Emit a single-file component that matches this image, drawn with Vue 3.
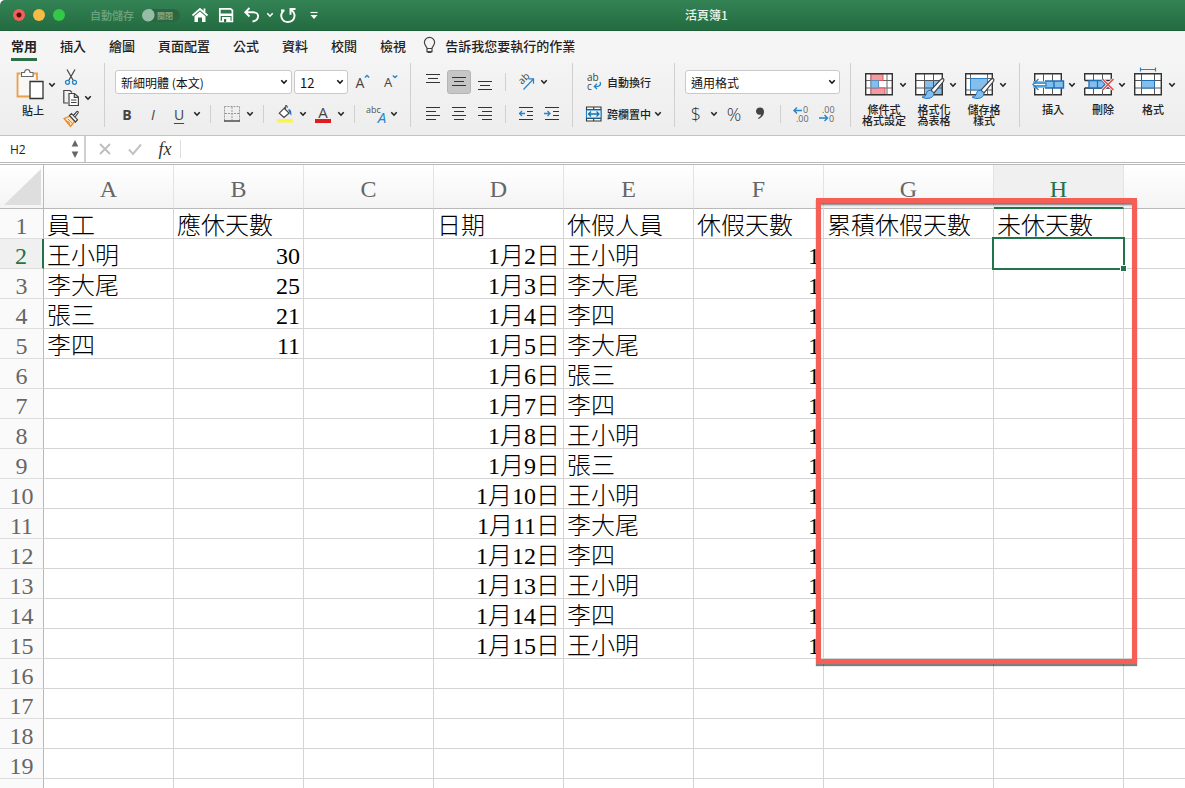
<script setup>
import { ref } from 'vue'

const tabs = ['常用', '插入', '繪圖', '頁面配置', '公式', '資料', '校閱', '檢視']
const columns = ['A', 'B', 'C', 'D', 'E', 'F', 'G', 'H', '']
const cellRef = ref('H2')
const formula = ref('')
const autosave = ref(false)

const staff = [['王小明', 30], ['李大尾', 25], ['張三', 21], ['李四', 11]]
const leave = ['王小明', '李大尾', '李四', '李大尾', '張三', '李四', '王小明', '張三', '王小明', '李大尾', '李四', '王小明', '李四', '王小明']

const rows = [['員工', '應休天數', '', '日期', '休假人員', '休假天數', '累積休假天數', '未休天數', '']]
for (let i = 0; i < 19; i++) {
  const s = staff[i] || ['', '']
  const l = leave[i]
  rows.push([s[0], s[1], '', l ? `1月${i + 2}日` : '', l || '', l ? 1 : '', '', '', ''])
}
const isRight = (r, c) => r > 0 && (c === 1 || c === 3 || c === 5)
</script>

<template>
  <div class="app">
    <svg class="defs" width="0" height="0" aria-hidden="true">
      <defs>
        <symbol id="chev" viewBox="0 0 8 6"><path d="M1.3 1.3 4 4.2 6.7 1.3" fill="none" stroke="currentColor" stroke-width="1.6" /></symbol>
        <symbol id="brush" viewBox="0 0 24 22">
          <path d="M22.5 .8c-1-.8-2 .1-3 1L10 12.2l3 2.7 8.700-10.500c1-1.300 1.700-2.700.8-3.600Z" fill="#fff" stroke="#444" stroke-width="1.200" />
          <path d="M9.600 12.300c-2.600-.1-3.800 1.300-4.200 3.200-.4 2-1.600 3.200-4.400 3.600 4.200 2.400 10 1.400 11.400-1.600.5-1 .6-1.800.5-2.600Z" fill="#83beec" stroke="#1f6fb5" stroke-width="1" />
        </symbol>
      </defs>
    </svg>

    <header class="titlebar">
      <div class="lights">
        <button class="light red" aria-label="關閉視窗"></button>
        <button class="light yellow" aria-label="縮到最小"></button>
        <button class="light green" aria-label="縮放"></button>
      </div>
      <label class="autosave">
        <span class="auto-text">自動儲存</span>
        <input v-model="autosave" type="checkbox" />
        <span class="switch">關閉</span>
      </label>
      <div class="quick">
        <button class="q-btn" aria-label="首頁">
          <svg width="18" height="18" viewBox="0 0 18 18"><path d="M1.500 9.500 9 3l7.500 6.500M13.500 6V2.500" fill="none" stroke="#fff" stroke-width="1.800" /><path d="M3.500 10.200 9 5.500l5.500 4.700V16H11v-4.500H7V16H3.500Z" fill="#fff" /></svg>
        </button>
        <button class="q-btn" aria-label="儲存">
          <svg width="18" height="18" viewBox="0 0 18 18"><path d="M2.800 2.800h10.800l1.800 1.500v11.200H2.800Z" fill="none" stroke="#fff" stroke-width="1.700" /><path d="M3 7.500h12v2.500H3ZM5 11h8.500v4.500H5Z" fill="#fff" /><path d="M7 13h2.200v3H7Z" fill="#257045" /></svg>
        </button>
        <button class="q-btn" aria-label="復原">
          <svg width="18" height="18" viewBox="0 0 18 18"><path d="M6.500 2 2.300 6.300l4.200 4.200M2.500 6.300h8c6.500.2 6.200 8-1 9.200" fill="none" stroke="#fff" stroke-width="1.900" /></svg>
        </button>
        <button class="q-chev" aria-label="復原選項"><svg width="8" height="6"><use href="#chev" /></svg></button>
        <button class="q-btn" aria-label="重複">
          <svg width="18" height="18" viewBox="0 0 18 18"><path d="M2 4.500h3.500M4.500 5c-4.500 4-1.800 11 4.300 11 7 0 9.500-8.500 2.700-12.300M16.500 3h-5v5.800" fill="none" stroke="#fff" stroke-width="1.900" /></svg>
        </button>
        <button class="q-more" aria-label="自訂工具列">
          <svg width="10" height="10" viewBox="0 0 10 10"><path d="M1.500 2.500h7" stroke="#fff" stroke-width="1.200" /><path d="M1.500 5h7L5 9Z" fill="#fff" /></svg>
        </button>
      </div>
      <h1 class="doc">活頁簿1</h1>
    </header>

    <nav class="tabs">
      <button v-for="(t, i) in tabs" :key="t" class="tab" :class="{ active: i === 0 }">{{ t }}</button>
      <button class="tell">
        <svg width="13" height="18" viewBox="0 0 13 18"><path d="M4 11.500c0-2-2.600-3.200-2.600-6a5.100 5.100 0 0 1 10.200 0c0 2.800-2.600 4-2.600 6ZM4 11.500v3.200h5v-3.200M4.500 15.500h4" fill="none" stroke="#444" stroke-width="1.200" /></svg>
        告訴我您要執行的作業
      </button>
    </nav>

    <section class="ribbon">
      <div class="group clipboard">
        <button class="paste">
          <span class="paste-top">
            <svg width="30" height="34" viewBox="0 0 30 34"><path d="M4.500 5.500H1.500v23H14M18 5.500h3V12" fill="none" stroke="#eba048" stroke-width="1.800" /><path d="M3.500 7h16v5H13v15H3.500Z" fill="#faf8f5" /><path d="M5.500 8.500v-4h3c.4-4 5.200-4 5.600 0h3v4Z" fill="#fff" stroke="#666" stroke-width="1.100" /><path d="M14 13.500h13v17H14Z" fill="#fff" stroke="#333" stroke-width="1.300" /></svg>
            <svg class="c" width="8" height="6"><use href="#chev" /></svg>
          </span>
          <span class="paste-label">貼上</span>
        </button>
        <div class="clip-side">
          <button class="clip-btn" aria-label="剪下"><svg width="16" height="18" viewBox="0 0 16 18"><path d="M4 1.500 10.300 12.500M12 1.500 5.700 12.500" fill="none" stroke="#444" stroke-width="1.200" /><circle cx="4.500" cy="14.300" r="2" fill="none" stroke="#2585c9" stroke-width="1.300" /><circle cx="11.500" cy="14.300" r="2" fill="none" stroke="#2585c9" stroke-width="1.300" /></svg></button>
          <button class="clip-btn" aria-label="複製"><svg width="16" height="18" viewBox="0 0 16 18"><path d="M5 14H.8V1.500H7L9 3.500" fill="none" stroke="#444" stroke-width="1.200" /><path d="M6 4.500h5.500L15.400 8v8.500H6ZM11.300 4.500V8.300h4" fill="#fff" stroke="#444" stroke-width="1.200" /><path d="M8 11h5.500M8 13.500h5.500" stroke="#444" /></svg><svg class="c" width="8" height="6"><use href="#chev" /></svg></button>
          <button class="clip-btn" aria-label="複製格式"><svg width="16" height="18" viewBox="0 0 16 18"><path d="m1 8.500 6-2.500 5 5-4.500 5.500Z" fill="#fbe0bb" stroke="#e58a2e" stroke-width="1.200" /><path d="M3 11l3 1 .5 3M5 9l4 4" stroke="#e58a2e" stroke-width="1" fill="none" /><path d="m6.500 5.500 2-1.800 6 6L12.500 12ZM10.500 5.500l3.200-3.800c1-.8 2 .2 1.300 1.300L12 7" fill="#fff" stroke="#444" stroke-width="1.200" /></svg></button>
        </div>
      </div>

      <div class="group font">
        <div class="row fields">
          <span class="select font-name"><select aria-label="字型"><option>新細明體 (本文)</option></select><svg width="8" height="6"><use href="#chev" /></svg></span>
          <span class="select font-size"><select aria-label="字型大小"><option>12</option></select><svg width="8" height="6"><use href="#chev" /></svg></span>
          <button class="btn" aria-label="放大字型"><span class="glyph">A</span><svg class="mini" width="6" height="12" viewBox="0 0 6 12"><path d="m.8 3.500 2.200-2 2.200 2" fill="none" stroke="#2585c9" stroke-width="1.300" /></svg></button>
          <button class="btn" aria-label="縮小字型"><span class="glyph small">A</span><svg class="mini" width="6" height="12" viewBox="0 0 6 12"><path d="m.8 1.500 2.200 2 2.200-2" fill="none" stroke="#2585c9" stroke-width="1.300" /></svg></button>
        </div>
        <div class="row">
          <button class="btn glyph bold">B</button>
          <button class="btn glyph italic">I</button>
          <button class="btn glyph under">U</button>
          <button class="drop" aria-label="底線選項"><svg width="8" height="6"><use href="#chev" /></svg></button>
          <i class="sep"></i>
          <button class="btn" aria-label="框線"><svg width="16" height="16" viewBox="0 0 16 16"><path d="M.5.500h15v14M.5.500v14M8 1v13M1 7.500h14" fill="none" stroke="#999" stroke-dasharray="2 1" /><path d="M0 15h16" stroke="#222" stroke-width="1.200" /></svg></button>
          <button class="drop" aria-label="框線選項"><svg width="8" height="6"><use href="#chev" /></svg></button>
          <i class="sep"></i>
          <button class="btn" aria-label="填滿色彩"><svg width="18" height="18" viewBox="0 0 18 18"><path d="M1 14h16v3.500H1Z" fill="#fdf443" /><path d="m8.500 3.500 4.500 4.700-5 4.300-4.700-4.300 6-6V5M9.200.8c1.500-.5 2.300.5 1.800 2" fill="#fff" stroke="#444" stroke-width="1.200" /><path d="M12.500 4c2.500.5 3.200 2.500 2.800 6.500-1.500-.8-1.800-3.500-2.800-4.500Z" fill="#2070b8" /></svg></button>
          <button class="drop" aria-label="填滿色彩選項"><svg width="8" height="6"><use href="#chev" /></svg></button>
          <button class="btn gap font-color" aria-label="字型色彩"><span class="glyph">A</span></button>
          <button class="drop" aria-label="字型色彩選項"><svg width="8" height="6"><use href="#chev" /></svg></button>
          <i class="sep"></i>
          <button class="btn phonetic" aria-label="注音"><span class="abc">abc</span><span class="blue-a">A</span></button>
          <button class="drop" aria-label="注音選項"><svg width="8" height="6"><use href="#chev" /></svg></button>
        </div>
      </div>

      <div class="group align">
        <div class="row">
          <button class="btn" aria-label="靠上對齊"><svg width="16" height="16" viewBox="0 0 16 16"><path d="M1 .5h14M3 4.500h10M1 8.500h14" stroke="#333" /></svg></button>
          <button class="btn pressed" aria-label="置中對齊"><svg width="16" height="16" viewBox="0 0 16 16"><path d="M1 3.500h14M3 7.500h10M1 11.500h14" stroke="#333" /></svg></button>
          <button class="btn" aria-label="靠下對齊"><svg width="16" height="16" viewBox="0 0 16 16"><path d="M1 7.500h14M3 11.500h10M1 15.500h14" stroke="#333" /></svg></button>
          <i class="sep narrow"></i>
          <button class="btn" aria-label="方向"><svg width="18" height="18" viewBox="0 0 18 18"><text x="0" y="0" transform="translate(5 12) rotate(-45)" class="svg-ab">ab</text><path d="M6.500 16.500 16.500 6M11.500 5.800h5v5" fill="none" stroke="#2585c9" stroke-width="1.200" /></svg></button>
          <button class="drop" aria-label="方向選項"><svg width="8" height="6"><use href="#chev" /></svg></button>
        </div>
        <div class="row">
          <button class="btn" aria-label="靠左"><svg width="16" height="16" viewBox="0 0 16 16"><path d="M1 1.500h14M1 5.500h10M1 9.500h14M1 13.500h10" stroke="#333" /></svg></button>
          <button class="btn" aria-label="置中"><svg width="16" height="16" viewBox="0 0 16 16"><path d="M1 1.500h14M3 5.500h10M1 9.500h14M3 13.500h10" stroke="#333" /></svg></button>
          <button class="btn" aria-label="靠右"><svg width="16" height="16" viewBox="0 0 16 16"><path d="M1 1.500h14M5 5.500h10M1 9.500h14M5 13.500h10" stroke="#333" /></svg></button>
          <i class="sep narrow"></i>
          <button class="btn" aria-label="減少縮排"><svg width="16" height="16" viewBox="0 0 16 16"><path d="M1 1.500h14M9 5.500h6M9 9.500h6M1 13.500h14" stroke="#333" /><path d="M7 7.500H1.500M4 5 1.500 7.500 4 10" fill="none" stroke="#2585c9" stroke-width="1.300" /></svg></button>
          <button class="btn" aria-label="增加縮排"><svg width="16" height="16" viewBox="0 0 16 16"><path d="M1 1.500h14M9 5.500h6M9 9.500h6M1 13.500h14" stroke="#333" /><path d="M0 7.500h6M3.500 5 6 7.500 3.500 10" fill="none" stroke="#2585c9" stroke-width="1.300" /></svg></button>
        </div>
      </div>

      <div class="group wrap">
        <div class="row">
          <button class="text-btn"><svg width="18" height="18" viewBox="0 0 18 18"><text x="2" y="8" class="svg-ab">ab</text><text x="2" y="17" class="svg-ab">c</text><path d="M15 9c1.500 3-.5 4.800-5.500 4.500M12 10.800 9.300 13.500l2.700 2.500" fill="none" stroke="#2585c9" stroke-width="1.300" /></svg>自動換行</button>
        </div>
        <div class="row">
          <button class="text-btn"><svg width="18" height="18" viewBox="0 0 18 18"><path d="M1.500 2h14.500v14H1.500ZM1.500 4.500H16M1.500 13.500H16M8.700 2v2.500M8.700 13.500V16" fill="#fff" stroke="#333" stroke-width="1.100" /><path d="M1.500 5h14.500v8H1.500Z" fill="#e3f1fb" stroke="#1f7fc0" /><path d="M3.500 9h10.500M6 6.500 3.500 9 6 11.500M11.500 6.500 14 9l-2.500 2.500" fill="none" stroke="#1473a8" stroke-width="1.300" /></svg>跨欄置中</button>
          <button class="drop wide" aria-label="跨欄置中選項"><svg width="8" height="6"><use href="#chev" /></svg></button>
        </div>
      </div>

      <div class="group number">
        <div class="row fields2">
          <span class="select number-format"><select aria-label="數值格式"><option>通用格式</option></select><svg width="8" height="6"><use href="#chev" /></svg></span>
        </div>
        <div class="row">
          <button class="btn num">$</button>
          <button class="drop" aria-label="貨幣選項"><svg width="8" height="6"><use href="#chev" /></svg></button>
          <button class="btn num gap">%</button>
          <button class="btn" aria-label="千分位樣式"><svg width="10" height="16" viewBox="0 0 10 16"><path d="M5 1.500c2.500 0 4 1.500 4 4.300 0 3.500-2.500 6-5.500 7.200l-.5-1c2-1 3-2.300 3-3.500-3 .8-5-.8-5-3.200C1 3 2.700 1.500 5 1.500Z" fill="#444" /></svg></button>
          <i class="sep narrow"></i>
          <button class="btn" aria-label="增加小數位數"><svg width="18" height="18" viewBox="0 0 18 18"><text x="11" y="8" class="svg-num">0</text><text x="4" y="17" class="svg-num">.00</text><path d="M10 5.500H2M5 2.500l-3 3 3 3" fill="none" stroke="#2585c9" stroke-width="1.400" /></svg></button>
          <button class="btn" aria-label="減少小數位數"><svg width="18" height="18" viewBox="0 0 18 18"><text x="4" y="8" class="svg-num">.00</text><text x="11" y="17" class="svg-num">0</text><path d="M1 13h8.500M6.500 10l3 3-3 3" fill="none" stroke="#2585c9" stroke-width="1.400" /></svg></button>
        </div>
      </div>

      <div class="group big-group styles">
        <button class="big">
          <span class="big-top">
            <svg width="28" height="34" viewBox="0 0 28 34"><path d="M.7 5.700h26.600v21H.7Z" fill="#fff" /><path d="M.7 12.500h26.600M.7 20h26.600M6 5.500v21M22 5.500v21" stroke="#666" fill="none" /><path d="M6 5.700h12v6.800H6ZM6 20h14v6.700H6Z" fill="#f59aa0" stroke="#e0525c" /><path d="M6 12.500h7.500V20H6Z" fill="#83beec" stroke="#5b8fc0" /><path d="M.7 5.700h26.600v21H.7Z" fill="none" stroke="#333" stroke-width="1.400" /></svg>
            <svg class="c" width="8" height="6"><use href="#chev" /></svg>
          </span>
          <span class="big-label">條件式<br />格式設定</span>
        </button>
        <button class="big">
          <span class="big-top">
            <svg width="28" height="34" viewBox="0 0 28 34"><path d="M.7 5.700h26.600v21H.7Z" fill="#fff" /><path d="M9.500 12.500h17.800v14.200H9.500Z" fill="#83beec" /><path d="M.7 12.500h26.600M.7 20h26.600M9.500 5.500v21M18.500 5.500v21" stroke="#555" fill="none" /><path d="M.7 5.700h26.600v21H.7Z" fill="none" stroke="#333" stroke-width="1.400" /><use href="#brush" x="6" y="10" width="24" height="22" /></svg>
            <svg class="c" width="8" height="6"><use href="#chev" /></svg>
          </span>
          <span class="big-label">格式化<br />為表格</span>
        </button>
        <button class="big">
          <span class="big-top">
            <svg width="28" height="34" viewBox="0 0 28 34"><path d="M.7 5.700h26.600v21H.7Z" fill="#fff" /><path d="M.7 10.500h26.600M.7 22h26.600M5.500 5.500v21M22.500 5.500v21" stroke="#666" fill="none" /><path d="M5.500 10.500h17V22h-17Z" fill="#83beec" stroke="#2d83c5" /><path d="M.7 5.700h26.600v21H.7Z" fill="none" stroke="#333" stroke-width="1.400" /><use href="#brush" x="6" y="10" width="24" height="22" /></svg>
            <svg class="c" width="8" height="6"><use href="#chev" /></svg>
          </span>
          <span class="big-label">儲存格<br />樣式</span>
        </button>
      </div>

      <div class="group big-group cells">
        <button class="big">
          <span class="big-top">
            <svg width="28" height="34" viewBox="0 0 28 34"><path d="M.7 5.700h26.600v21H.7Z" fill="#fff" stroke="#333" stroke-width="1.400" /><path d="M9.500 6v7M18.500 6v7M9.500 20v7M18.500 20v7" stroke="#555" /><path d="M-1 13h30v7H-1Z" fill="#83beec" /><path d="M11 13h18.500v7H11M20 13v7" fill="none" stroke="#1f6fb5" stroke-width="1.400" /><path d="M-1 15.500h13v2H-1Z" fill="#fff" /><path d="m4.500 11-5.500 5.500 5.500 5.500M0 15.200h12v2.600H0" fill="none" stroke="#2585c9" stroke-width="1.300" /></svg>
            <svg class="c" width="8" height="6"><use href="#chev" /></svg>
          </span>
          <span class="big-label">插入</span>
        </button>
        <button class="big">
          <span class="big-top">
            <svg width="28" height="34" viewBox="0 0 28 34"><path d="M.7 12.500V5.700h26.600v6.800H.7M.7 20v6.700h26.600V20H.7" fill="#fff" stroke="#333" stroke-width="1.400" /><path d="M9.500 6v7M18.500 6v7M9.500 20v7M18.500 20v7" stroke="#555" /><path d="M5 12.700h13l3 3.500-3 3.800H5ZM13.500 12.700V20" fill="#83beec" stroke="#1f6fb5" stroke-width="1.300" /><path d="m18.500 11 11 11M29.500 11l-11 11" stroke="#f3f3f3" stroke-width="3" /><path d="m18.500 11 11 11M29.500 11l-11 11" stroke="#e8484e" stroke-width="1.500" /></svg>
            <svg class="c" width="8" height="6"><use href="#chev" /></svg>
          </span>
          <span class="big-label">刪除</span>
        </button>
        <button class="big">
          <span class="big-top">
            <svg width="28" height="34" viewBox="0 0 28 34"><path d="M.7 5.700h26.600v21H.7Z" fill="#fff" /><path d="M.7 12.500h26.600M.7 20h26.600M7.500 5.500v21M20.500 5.500v21" stroke="#555" fill="none" /><path d="M7.500 12.500h13V20h-13Z" fill="#83beec" stroke="#1f6fb5" /><path d="M.7 5.700h26.600v21H.7Z" fill="none" stroke="#333" stroke-width="1.400" /><path d="M6.500 1.500h15M6.500-.5v4M21.500-.5v4" stroke="#2585c9" stroke-width="1.200" /></svg>
            <svg class="c" width="8" height="6"><use href="#chev" /></svg>
          </span>
          <span class="big-label">格式</span>
        </button>
      </div>
    </section>

    <section class="formula">
      <div class="name-box">
        <input v-model="cellRef" aria-label="名稱方塊" />
        <svg width="8" height="20" viewBox="0 0 8 20"><path d="M4 1 7.300 7.500H.7ZM4 19 .7 12.500h6.600Z" fill="#666" /></svg>
      </div>
      <button class="f-btn" aria-label="取消"><svg width="14" height="14" viewBox="0 0 14 14"><path d="m2 2 10 10M12 2 2 12" stroke="#bdbdbd" stroke-width="1.800" /></svg></button>
      <button class="f-btn" aria-label="輸入"><svg width="14" height="14" viewBox="0 0 14 14"><path d="m1 7.500 4 4.500 8-9.500" fill="none" stroke="#c2c2c2" stroke-width="2" /></svg></button>
      <button class="f-btn fx">fx</button>
      <input v-model="formula" class="f-input" aria-label="資料編輯列" />
    </section>

    <main class="sheet">
      <table class="grid">
        <colgroup>
          <col class="col-head" />
          <col v-for="n in 6" :key="n" class="col-std" />
          <col class="col-wide" />
          <col class="col-std" />
          <col />
        </colgroup>
        <thead>
          <tr>
            <th class="corner"><svg width="38" height="38" viewBox="0 0 38 38"><path d="M37 1v36H0Z" fill="#dedede" /></svg></th>
            <th v-for="c in columns" :key="c" scope="col" :class="{ current: c === 'H' }">{{ c }}</th>
          </tr>
        </thead>
        <tbody>
          <tr v-for="(row, r) in rows" :key="r">
            <th scope="row" :class="{ current: r === 1 }">{{ r + 1 }}</th>
            <td v-for="(cell, c) in row" :key="c" :class="{ right: isRight(r, c), chosen: r === 1 && c === 7 }">{{ cell }}</td>
          </tr>
        </tbody>
      </table>
      <div class="callout"></div>
    </main>
  </div>
</template>

<style>
html, body, #app { height: 100%; }
body { margin: 0; overflow: hidden; }
</style>

<style scoped>
* { box-sizing: border-box; }
.app { display: flex; flex-direction: column; height: 100%; overflow: hidden; background: #fff; color: #222; font-family: "Noto Sans CJK TC", sans-serif; font-size: 12px; }
.defs { position: absolute; }
button, input, select { font: inherit; color: inherit; margin: 0; padding: 0; border: 0; background: none; }
svg { display: block; flex: none; overflow: visible; }

.titlebar { position: relative; display: flex; align-items: center; flex: none; height: 31px; background: linear-gradient(#338355, #236b40); border-bottom: 1px solid #1f5f39; border-radius: 5px 0 0; color: #fff; }
.lights { display: flex; gap: 8px; padding-left: 13px; }
.light { width: 12px; height: 12px; border-radius: 50%; }
.red { background: radial-gradient(circle, #5c0b08 0 2px, #f2605a 3px); }
.yellow { background: #f8bc45; }
.green { background: #34c748; }
.autosave { display: flex; align-items: center; gap: 8px; margin-left: 25px; font-size: 11px; font-weight: 500; color: #6ba483; }
.autosave input { position: absolute; opacity: 0; }
.switch { display: flex; align-items: center; justify-content: flex-end; width: 38px; height: 13px; padding-right: 7px; border-radius: 7px; background: radial-gradient(circle at 6px 6px, #96bda5 0 6px, #2a6643 7px); font-size: 8px; color: #8fb7a0; }
.quick { display: flex; align-items: center; margin-left: 7px; }
.q-btn { width: 26px; display: flex; justify-content: center; }
.q-chev { width: 10px; display: flex; justify-content: center; color: #fff; }
.q-more { width: 26px; display: flex; justify-content: center; }
.doc { position: absolute; left: 0; right: 0; margin: 0; padding-left: 228px; text-align: center; font-size: 12px; line-height: 18px; font-weight: 500; color: #eaf4ee; pointer-events: none; }

.tabs { display: flex; flex: none; align-items: center; height: 32px; padding-left: 11px; gap: 23px; background: #f5f5f5; font-size: 13px; font-weight: 500; color: #222; }
.tab { height: 28px; line-height: 26px; border-bottom: 3px solid transparent; white-space: nowrap; }
.active { border-color: #2b7048; font-weight: 700; }
.tell { display: flex; align-items: center; gap: 9px; margin-left: -6px; line-height: 26px; padding-bottom: 3px; white-space: nowrap; }

.ribbon { display: flex; flex: none; height: 73px; padding-bottom: 8px; background: linear-gradient(#f4f4f4, #ededed); border-bottom: 1px solid #c4c4c4; }
.group { display: flex; flex-direction: column; flex: none; gap: 8px; padding-top: 7px; border-right: 1px solid #d0d0d0; }
.row { display: flex; align-items: center; height: 24px; }
.btn { display: flex; align-items: center; justify-content: center; width: 26px; height: 24px; }
.drop { display: flex; align-items: center; justify-content: center; width: 10px; height: 24px; }
.wide { width: 14px; }
.gap { margin-left: 2px; }
.sep { width: 1px; height: 18px; margin: 0 8px; background: #d0d0d0; }
.narrow { margin: 0 7px; }
.pressed { background: #c6c6c6; border: 1px solid #b5b5b5; border-radius: 3px; width: 24px; margin: 0 1px; }
.select { position: relative; display: flex; align-items: center; height: 24px; border: 1px solid #c9c9c9; border-radius: 3px; background: #fff; color: #111; }
.select select { appearance: none; width: 100%; height: 22px; padding-left: 5px; font-size: 12px; outline: none; }
.select svg { position: absolute; right: 3px; pointer-events: none; }
.font { padding-left: 9px; padding-right: 6px; }
.fields { gap: 2px; padding-left: 1px; }
.font-name { width: 177px; }
.font-size { width: 54px; }
.font-size select { font-size: 13px; }
.glyph { font-family: "Open Sans", sans-serif; font-size: 14px; color: #444; }
.small { font-size: 13px; }
.mini { align-self: flex-start; margin-top: 4px; }
.bold { font-weight: 700; }
.italic { font-style: italic; }
.under { text-decoration: underline; text-underline-offset: 3px; }
.font-color .glyph { width: 16px; height: 18px; line-height: 14px; border-bottom: 4px solid #e01b24; text-align: center; font-size: 15px; }
.phonetic { align-items: flex-start; font-family: "Open Sans", sans-serif; }
.abc { font-size: 9px; line-height: 16px; color: #555; }
.blue-a { margin-left: -3px; font-size: 15px; font-style: italic; line-height: 30px; color: #2585c9; }
.svg-ab { font: 10px "Open Sans", sans-serif; fill: #444; }
.svg-num { font: 9px "Open Sans", sans-serif; fill: #666; }
.align { padding-left: 9px; padding-right: 7px; }
.wrap { padding-left: 12px; padding-right: 9px; }
.text-btn { display: flex; align-items: center; gap: 4px; font-size: 11px; font-weight: 500; white-space: nowrap; }
.number { padding-left: 8px; padding-right: 10px; }
.fields2 { padding-left: 2px; }
.number-format { width: 155px; }
.num { font-family: "Open Sans", sans-serif; font-size: 18px; font-weight: 300; color: #333; }

.clipboard { flex-direction: row; gap: 7px; width: 105px; padding: 5px 0 0 16px; }
.paste { display: flex; flex-direction: column; align-items: flex-start; width: 40px; height: 54px; }
.paste-top { display: flex; align-items: center; gap: 2px; }
.paste-label { width: 34px; text-align: center; font-size: 11px; line-height: 16px; font-weight: 500; }
.clip-side { display: flex; flex-direction: column; gap: 3px; }
.clip-btn { display: flex; align-items: center; gap: 5px; height: 18px; }

.big-group { flex-direction: row; gap: 0; padding-top: 5px; padding-left: 8px; padding-right: 10px; }
.cells { border-right: 0; padding-right: 0; }
.big { display: flex; flex-direction: column; width: 50px; gap: 2px; }
.big-top { display: flex; align-items: center; gap: 6px; padding-left: 6px; }
.big-label { width: 50px; text-align: center; font-size: 11px; line-height: 11px; font-weight: 500; white-space: nowrap; }

.formula { display: flex; flex: none; align-items: center; height: 29px; border-bottom: 3px double #b9b9b9; background: #fff; }
.name-box { display: flex; align-items: center; width: 86px; height: 26px; padding: 0 5px 0 10px; border-right: 2px solid #cfcfcf; }
.name-box input { flex: 1; min-width: 0; font-family: "Open Sans", sans-serif; outline: none; }
.f-btn { display: flex; align-items: center; justify-content: center; width: 30px; height: 24px; }
.name-box + .f-btn { margin-left: 4px; }
.fx { font: italic 18px "Liberation Serif", serif; color: #333; }
.f-input { flex: 1; height: 18px; border-left: 1px solid #ddd; outline: none; }

.sheet { position: relative; flex: 1; min-height: 0; overflow: hidden; }
.grid { width: 100%; table-layout: fixed; border-collapse: separate; border-spacing: 0; font-family: "Liberation Serif", "Noto Sans CJK TC", serif; color: #000; }
.col-head { width: 44px; }
.col-std { width: 130px; }
.col-wide { width: 170px; }
.grid th, .grid td { padding: 0; white-space: nowrap; }
.grid th { font-weight: 400; color: #666; border-right: 1px solid #e3e3e3; border-bottom: 1px solid #b9b9b9; }
.grid thead th { height: 44px; padding-top: 5px; font-size: 24px; line-height: 30px; background: linear-gradient(#fff, #f4f4f4); }
.grid thead .corner { padding: 0 0 0 4px; border-right: 1px solid #b9b9b9; }
.grid thead .current { background: #f0f0f0; color: #21734a; border-bottom: 2px solid #21734a; }
.grid tbody th { height: 30px; padding-top: 5px; font-size: 24px; line-height: 24px; background: #fafafa; border-right: 1px solid #b9b9b9; border-bottom: 1px solid #dedede; }
.grid tbody .current { color: #21734a; background: #f0f0f0; border-right: 2px solid #21734a; }
.grid td { height: 30px; padding: 5px 3px 0; font-size: 24px; line-height: 24px; font-weight: 300; border-right: 1px solid #d4d4d4; border-bottom: 1px solid #d4d4d4; }
.grid th:last-child, .grid td:last-child { border-right: 0; }
.grid .right { text-align: right; }
.grid .chosen { position: relative; }
.chosen::before { content: ""; position: absolute; inset: -2px -2px -2px -2px; border: 2px solid #21734a; }
.chosen::after { content: ""; position: absolute; right: -3px; bottom: -3px; width: 5px; height: 5px; background: #21734a; outline: 1px solid #fff; }
.callout { position: absolute; left: 816px; top: 33px; width: 321px; height: 466px; border: 5px solid #f65f56; box-shadow: 0 2px 1px rgba(0, 0, 0, .5), inset 0 3px 2px -1px rgba(0, 0, 0, .5); pointer-events: none; }
</style>
